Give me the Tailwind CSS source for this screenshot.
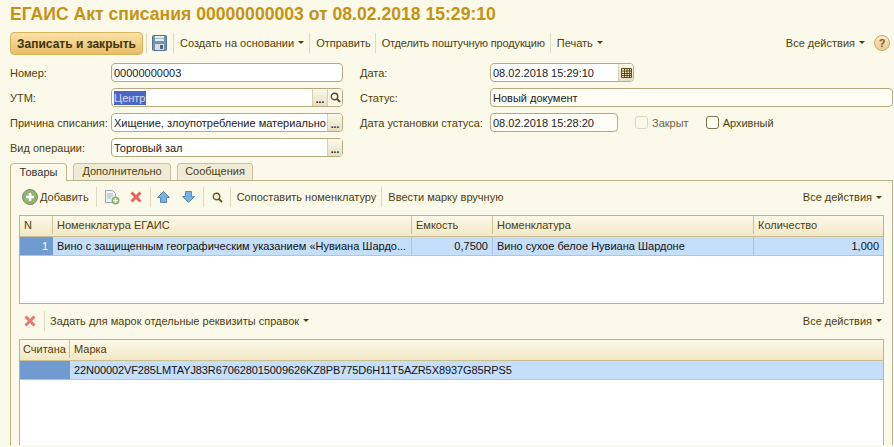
<!DOCTYPE html>
<html lang="ru"><head><meta charset="utf-8"><script src="https://cdn.jsdelivr.net/npm/@tailwindcss/browser@4"></script></head>
<body class="m-0 bg-[#fbf9ea]">
<div class="w-[894px] h-[447px] overflow-hidden bg-[#fbf9ea] font-['Liberation_Sans',Arial,sans-serif] text-[11px] leading-[14px] text-[#4d3e0a] flex flex-col">
  <h1 class="h-[32px] pl-[10px] pt-[3px] m-0 text-[17.6px] leading-[22px] font-bold text-[#c69214] whitespace-nowrap">ЕГАИС Акт списания 00000000003 от 08.02.2018 15:29:10</h1>
  <div class="h-[23px] flex items-center pl-[10px] pr-[4px] pb-[2px] whitespace-nowrap">
    <div class="w-[133px] h-[23px] -mb-[2px] rounded-[4px] border border-[#d7b25c] bg-gradient-to-b from-[#fbe3a8] to-[#e8bd68] flex items-center justify-center font-bold text-[12px] text-[#3f3208]">Записать и закрыть</div>
    <div class="w-px h-[20px] bg-[#dfdcc2] ml-[3px]"></div>
    <svg class="ml-[5px] mr-[6px]" width="15" height="16" viewBox="0 0 15 16"><rect x=".5" y=".5" width="14" height="15" rx="1" fill="#6f94b8" stroke="#52708f"/><rect x="3" y="1" width="9" height="5" fill="#e6edf3"/><rect x="3" y="3" width="9" height="1" fill="#9db3c8"/><rect x="3" y="9" width="9" height="6" fill="#d7dde2"/><rect x="8" y="10" width="3" height="4" fill="#4c6580"/></svg>
    <div class="w-px h-[20px] bg-[#dfdcc2]"></div>
    <span class="ml-[6px]">Создать на основании</span><svg class="ml-[4px]" width="6" height="3" viewBox="0 0 6 3"><path d="M0 0h6L3 3z" fill="#4d3e0a"/></svg>
    <div class="w-px h-[20px] bg-[#dfdcc2] ml-[5px]"></div>
    <span class="ml-[6px]">Отправить</span>
    <div class="w-px h-[20px] bg-[#dfdcc2] ml-[4px]"></div>
    <span class="ml-[6px] tracking-[-0.15px]">Отделить поштучную продукцию</span>
    <div class="w-px h-[20px] bg-[#dfdcc2] ml-[5px]"></div>
    <span class="ml-[6px]">Печать</span><svg class="ml-[4px]" width="6" height="3" viewBox="0 0 6 3"><path d="M0 0h6L3 3z" fill="#4d3e0a"/></svg>
    <span class="ml-auto">Все действия</span><svg class="ml-[4px]" width="6" height="3" viewBox="0 0 6 3"><path d="M0 0h6L3 3z" fill="#4d3e0a"/></svg>
    <div class="ml-[9px] w-[16px] h-[16px] rounded-full border border-[#c9a86a] bg-gradient-to-b from-[#fbeccb] to-[#f0c98a] flex items-center justify-center text-[11px] font-bold text-[#8a5a12]">?</div>
  </div>
  <div class="flex pt-[8px] h-[109px]">
    <div class="w-[360px] pl-[10px] flex flex-col gap-[6px] shrink-0">
      <div class="flex items-center h-[19px]"><span class="w-[101px] shrink-0">Номер:</span>
        <div class="w-[232px] h-[19px] bg-white border border-[#b5ab82] rounded-[4px] pl-[2px] flex items-center text-[#222]">00000000003</div></div>
      <div class="flex items-center h-[19px]"><span class="w-[101px] shrink-0">УТМ:</span>
        <div class="w-[232px] h-[19px] bg-white border border-[#b5ab82] rounded-[4px] pl-[2px] flex items-center overflow-hidden text-[#222]"><span class="bg-[#4a66c4] text-[#d8def5]">Центр</span>
          <div class="ml-auto w-[15px] h-full shrink-0 border-l border-[#d5d0ae] bg-gradient-to-b from-[#fbf9ea] to-[#e5e0c4] flex items-end justify-center text-[10px] leading-[12px] font-bold">...</div>
          <div class="w-[15px] h-full shrink-0 border-l border-[#d5d0ae] bg-[#fbf9ea] flex items-center justify-center"><svg width="11" height="11" viewBox="0 0 11 11"><circle cx="4.5" cy="4.5" r="3.2" fill="none" stroke="#5c4a18" stroke-width="1.4"/><path d="M7 7l3 3" stroke="#5c4a18" stroke-width="1.8"/></svg></div></div></div>
      <div class="flex items-center h-[19px]"><span class="w-[101px] shrink-0 whitespace-nowrap">Причина списания:</span>
        <div class="w-[232px] h-[19px] bg-white border border-[#b5ab82] rounded-[4px] pl-[2px] flex items-center overflow-hidden whitespace-nowrap text-[#222]"><span>Хищение, злоупотребление материально</span>
          <div class="ml-auto w-[15px] h-full shrink-0 border-l border-[#d5d0ae] bg-gradient-to-b from-[#fbf9ea] to-[#e5e0c4] flex items-end justify-center text-[10px] leading-[12px] font-bold">...</div></div></div>
      <div class="flex items-center h-[19px]"><span class="w-[101px] shrink-0">Вид операции:</span>
        <div class="w-[232px] h-[19px] bg-white border border-[#b5ab82] rounded-[4px] pl-[2px] flex items-center text-[#222]">Торговый зал
          <div class="ml-auto w-[15px] h-full shrink-0 border-l border-[#d5d0ae] bg-gradient-to-b from-[#fbf9ea] to-[#e5e0c4] flex items-end justify-center text-[10px] leading-[12px] font-bold">...</div></div></div>
    </div>
    <div class="flex-1 flex flex-col gap-[6px] pr-[1px]">
      <div class="flex items-center h-[19px]"><span class="w-[130px] shrink-0">Дата:</span>
        <div class="w-[144px] h-[19px] bg-white border border-[#b5ab82] rounded-[4px] pl-[2px] flex items-center overflow-hidden text-[#222]">08.02.2018 15:29:10
          <div class="ml-auto w-[15px] h-full shrink-0 border-l border-[#d5d0ae] bg-gradient-to-b from-[#fbf9ea] to-[#e5e0c4] flex items-center justify-center"><svg width="11" height="11" viewBox="0 0 11 11"><path d="M.5 1.5h10v9H.5zM.5 4h10M.5 6.500h10M.5 8.500h10M3.500 1.500v9M6 1.500v9M8.500 1.500v9" fill="#efe7c8" stroke="#5c4a18"/></svg></div></div></div>
      <div class="flex items-center h-[19px]"><span class="w-[130px] shrink-0">Статус:</span>
        <div class="flex-1 h-[19px] bg-[#fefdf6] border border-[#b5ab82] rounded-[4px] pl-[2px] flex items-center text-[#222]">Новый документ</div></div>
      <div class="flex items-center h-[19px]"><span class="w-[130px] shrink-0 whitespace-nowrap">Дата установки статуса:</span>
        <div class="w-[128px] h-[19px] bg-[#fefdf6] border border-[#b5ab82] rounded-[4px] pl-[2px] flex items-center text-[#222]">08.02.2018 15:28:20</div>
        <div class="ml-[17px] w-[13px] h-[13px] border border-[#dcd8c0] rounded-[3px]"></div><span class="ml-[4px] text-[#6b6242]">Закрыт</span>
        <div class="ml-[17px] w-[13px] h-[13px] border border-[#7f7349] rounded-[3px] bg-[#fefdf6]"></div><span class="ml-[4px]">Архивный</span></div>
    </div>
  </div>
  <div class="h-[17px] flex items-end pl-[10px] gap-[6px] relative z-10 -mt-[1px]">
    <div class="w-[57px] h-[18px] -mb-px bg-[#fbf9ea] border border-b-0 border-[#c0b68c] border-t-[#e0b860] rounded-t-[4px] text-center pt-[1px] text-[#333]">Товары</div>
    <div class="w-[98px] h-[17px] bg-[#f0ebd6] border border-b-0 border-[#c9c09c] rounded-t-[4px] text-center">Дополнительно</div>
    <div class="w-[76px] h-[17px] bg-[#f0ebd6] border border-b-0 border-[#c9c09c] rounded-t-[4px] text-center">Сообщения</div>
  </div>
  <div class="ml-[10px] mr-[1px] h-[265px] shrink-0 border border-b-0 border-[#bdb38a] px-[8px] flex flex-col">
    <div class="h-[34px] flex items-center whitespace-nowrap pr-[2px] pb-[2px]">
      <svg width="16" height="16" viewBox="0 0 16 16" class="ml-[3px]"><circle cx="8" cy="8" r="7.500" fill="#93b56f" stroke="#7d8a6a"/><path d="M8 4v8M4 8h8" stroke="#fff" stroke-width="2.600"/></svg>
      <span class="ml-[2px]">Добавить</span>
      <div class="w-px h-[20px] bg-[#dfdcc2] ml-[7px]"></div>
      <svg class="ml-[7px]" width="16" height="16" viewBox="0 0 16 16"><path d="M1.500 1.500h7l3 3v9h-10z" fill="#f2f4f6" stroke="#97a5b2"/><path d="M3 5h6M3 7h6M3 9h4" stroke="#9db3c8"/><circle cx="11.500" cy="11.500" r="4" fill="#8fb26b"/><path d="M11.500 9v5M9 11.500h5" stroke="#fff" stroke-width="1.500"/></svg>
      <svg class="ml-[10px]" width="12" height="12" viewBox="0 0 12 12"><path d="M1.500 1.500l9 9M10.500 1.500l-9 9" stroke="#e8645a" stroke-width="3"/></svg>
      <div class="w-px h-[20px] bg-[#dfdcc2] ml-[8px]"></div>
      <svg class="ml-[6px]" width="13" height="12" viewBox="0 0 13 12"><path d="M6.500.500l6 6h-3v5h-6v-5h-3z" fill="#72b2e4" stroke="#5f8aa8"/></svg>
      <svg class="ml-[12px]" width="13" height="12" viewBox="0 0 13 12"><path d="M6.500 11.500l6-6h-3v-5h-6v5h-3z" fill="#72b2e4" stroke="#5f8aa8"/></svg>
      <div class="w-px h-[20px] bg-[#dfdcc2] ml-[8px]"></div>
      <svg class="ml-[8px]" width="11" height="11" viewBox="0 0 11 11"><circle cx="4.500" cy="4.500" r="3.200" fill="none" stroke="#6b5516" stroke-width="1.400"/><path d="M7 7l3 3" stroke="#6b5516" stroke-width="1.800"/></svg>
      <div class="w-px h-[20px] bg-[#dfdcc2] ml-[7px]"></div>
      <span class="ml-[6px]">Сопоставить номенклатуру</span>
      <div class="w-px h-[20px] bg-[#dfdcc2] ml-[5px]"></div>
      <span class="ml-[6px]">Ввести марку вручную</span>
      <span class="ml-auto">Все действия</span><svg class="ml-[4px]" width="6" height="3" viewBox="0 0 6 3"><path d="M0 0h6L3 3z" fill="#4d3e0a"/></svg>
    </div>
    <div class="w-[865px] h-[89px] border border-[#bdb38a] bg-white shrink-0">
      <div class="flex h-[21px] pb-[2px] bg-gradient-to-b from-[#fbf9ea] to-[#f2e8c6] border-b border-[#cbbf92]">
        <div class="w-[33px] pl-[4px] border-r border-[#cbbf92] flex items-center">N</div>
        <div class="w-[359px] pl-[4px] border-r border-[#cbbf92] flex items-center">Номенклатура ЕГАИС</div>
        <div class="w-[81px] pl-[4px] border-r border-[#cbbf92] flex items-center">Емкость</div>
        <div class="w-[261px] pl-[4px] border-r border-[#cbbf92] flex items-center">Номенклатура</div>
        <div class="flex-1 pl-[4px] flex items-center">Количество</div>
      </div>
      <div class="flex h-[19px] bg-[#c5dffa] border-b border-[#a9c6e4] text-[#111]">
        <div class="w-[33px] pr-[5px] bg-[#6f9bd1] text-white text-right flex items-center justify-end">1</div>
        <div class="w-[359px] pl-[4px] border-r border-[#a9c6e4] flex items-center whitespace-nowrap overflow-hidden">Вино с защищенным географическим указанием «Нувиана Шардо...</div>
        <div class="w-[81px] pr-[4px] border-r border-[#a9c6e4] flex items-center justify-end">0,7500</div>
        <div class="w-[261px] pl-[4px] border-r border-[#a9c6e4] flex items-center">Вино сухое белое Нувиана Шардоне</div>
        <div class="flex-1 pr-[4px] flex items-center justify-end">1,000</div>
      </div>
    </div>
    <div class="h-[35px] flex items-center whitespace-nowrap pr-[2px] pb-[2px] shrink-0">
      <svg class="ml-[5px]" width="12" height="12" viewBox="0 0 12 12"><path d="M1.500 1.500l9 9M10.500 1.500l-9 9" stroke="#e8796e" stroke-width="3"/></svg>
      <div class="w-px h-[20px] bg-[#dfdcc2] ml-[8px]"></div>
      <span class="ml-[5px]">Задать для марок отдельные реквизиты справок</span><svg class="ml-[4px]" width="6" height="3" viewBox="0 0 6 3"><path d="M0 0h6L3 3z" fill="#4d3e0a"/></svg>
      <span class="ml-auto">Все действия</span><svg class="ml-[4px]" width="6" height="3" viewBox="0 0 6 3"><path d="M0 0h6L3 3z" fill="#4d3e0a"/></svg>
    </div>
    <div class="w-[865px] flex-1 border border-b-0 border-[#bdb38a] bg-white">
      <div class="flex h-[21px] pb-[2px] bg-gradient-to-b from-[#fbf9ea] to-[#f2e8c6] border-b border-[#cbbf92]">
        <div class="w-[50px] pl-[3px] border-r border-[#cbbf92] flex items-center">Считана</div>
        <div class="flex-1 pl-[4px] flex items-center">Марка</div>
      </div>
      <div class="flex h-[19px] bg-[#c5dffa] border-b border-[#a9c6e4] text-[#111]">
        <div class="w-[50px] bg-[#6f9bd1]"></div>
        <div class="flex-1 pl-[4px] flex items-center tracking-[-0.1px]">22N00002VF285LMTAYJ83R670628015009626KZ8PB775D6H11T5AZR5X8937G85RPS5</div>
      </div>
    </div>
  </div>
</div>
</body></html>
